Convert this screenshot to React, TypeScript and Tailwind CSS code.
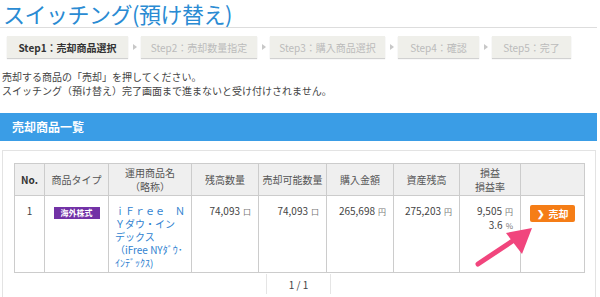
import React from 'react';

const steps = [
  { label: 'Step1：売却商品選択', w: 'w-[121px]', active: true },
  { label: 'Step2：売却数量指定', w: 'w-[116px]', active: false },
  { label: 'Step3：購入商品選択', w: 'w-[115px]', active: false },
  { label: 'Step4：確認', w: 'w-[81px]', active: false },
  { label: 'Step5：完了', w: 'w-[79px]', active: false },
];

function Unit({ children }: { children: React.ReactNode }) {
  return <span className="ml-[3px] text-[8px] text-[#777]">{children}</span>;
}

export default function App() {
  return (
    <div
      className="relative w-[600px] h-[297px] overflow-hidden bg-white text-[#444]"
      style={{ fontFamily: '"Noto Sans CJK JP", "Noto Sans", sans-serif' }}
    >
      {/* title */}
      <div className="mr-[3px] border-b border-[#dddddd] pl-[3px]">
        <h1 className="text-[22px] leading-[27px] text-[#2a8bd3] tracking-[-0.5px]">スイッチング(預け替え)</h1>
      </div>

      {/* steps */}
      <div className="mt-[8px] flex items-center pl-[7px]">
        {steps.map((s, i) => (
          <React.Fragment key={i}>
            {i > 0 && (
              <div className="flex w-[13px] justify-center">
                <span className="h-0 w-0 border-y-[3px] border-l-[4px] border-y-transparent border-l-[#c8c8c8]" />
              </div>
            )}
            <div
              className={`${s.w} flex h-[22px] items-center justify-center bg-[#efefea] text-[10px] shadow-[0_1px_1px_rgba(0,0,0,0.18)] ${
                s.active ? 'font-bold text-[#333]' : 'text-[#bbbbbb]'
              }`}
            >
              {s.label}
            </div>
          </React.Fragment>
        ))}
      </div>

      {/* notes */}
      <div className="mt-[12px] pl-[2px] text-[10px] leading-[14px] text-[#444]">
        <p>売却する商品の「売却」を押してください。</p>
        <p>スイッチング（預け替え）完了画面まで進まないと受け付けされません。</p>
      </div>

      {/* section header */}
      <div className="mr-[3px] mt-[15px] flex h-[28px] items-center bg-[#3a9de6] pl-[12px] text-[12px] font-bold text-white">
        売却商品一覧
      </div>

      {/* panel */}
      <div className="ml-[2px] mr-[4px] mt-[9px] border border-[#e3e3e3] pl-[11px] pr-[12px] pt-[12px] pb-[10px]">
        <table className="w-[570px] table-fixed border-collapse text-[10px]">
          <colgroup>
            <col className="w-[30px]" />
            <col className="w-[64px]" />
            <col className="w-[83px]" />
            <col className="w-[67px]" />
            <col className="w-[68px]" />
            <col className="w-[67px]" />
            <col className="w-[66px]" />
            <col className="w-[61px]" />
            <col className="w-[64px]" />
          </colgroup>
          <thead>
            <tr className="h-[32px] bg-[#efefef] text-center leading-[14px] text-[#555]">
              <th className="border border-[#cccccc] font-bold text-[#333]">No.</th>
              <th className="border border-[#cccccc] font-normal">商品タイプ</th>
              <th className="border border-[#cccccc] font-normal">
                運用商品名
                <br />
                （略称）
              </th>
              <th className="border border-[#cccccc] font-normal">残高数量</th>
              <th className="border border-[#cccccc] font-normal">売却可能数量</th>
              <th className="border border-[#cccccc] font-normal">購入金額</th>
              <th className="border border-[#cccccc] font-normal">資産残高</th>
              <th className="border border-[#cccccc] font-normal">
                損益
                <br />
                損益率
              </th>
              <th className="border border-[#cccccc]" />
            </tr>
          </thead>
          <tbody>
            <tr className="h-[77px] align-top leading-[13px]">
              <td className="border border-[#cccccc] pt-[8px] text-center">1</td>
              <td className="border border-[#cccccc] pt-[9px] text-center">
                <span className="inline-block h-[12px] w-[46px] bg-[#7232a6] text-center text-[8px] font-bold leading-[12px] text-white">
                  海外株式
                </span>
              </td>
              <td className="border border-[#cccccc] px-[6px] pt-[8px] text-[#2f7fd0]">
                <span>
                  ｉＦｒｅｅ　ＮＹダウ・イン
                  <br />
                  デックス
                </span>
                <br />
                <span className="text-[10px]">（iFree NYﾀﾞｳ･ｲﾝﾃﾞｯｸｽ)</span>
              </td>
              <td className="border border-[#cccccc] pr-[7px] pt-[8px] text-right">
                74,093<Unit>口</Unit>
              </td>
              <td className="border border-[#cccccc] pr-[7px] pt-[8px] text-right">
                74,093<Unit>口</Unit>
              </td>
              <td className="border border-[#cccccc] pr-[7px] pt-[8px] text-right">
                265,698<Unit>円</Unit>
              </td>
              <td className="border border-[#cccccc] pr-[7px] pt-[8px] text-right">
                275,203<Unit>円</Unit>
              </td>
              <td className="border border-[#cccccc] pr-[7px] pt-[8px] text-right">
                9,505<Unit>円</Unit>
                <br />
                3.6<Unit>%</Unit>
              </td>
              <td className="border border-[#cccccc] pt-[9px] text-center">
                <button className="inline-flex h-[17px] w-[45px] items-center justify-center gap-[4px] rounded-[2px] bg-[#f57d16] text-[10px] font-bold text-white">
                  <span className="text-[9px]">❯</span>売却
                </button>
              </td>
            </tr>
          </tbody>
        </table>

        {/* pagination */}
        <div className="mt-[1px] flex justify-center">
          <div className="flex h-[20px] w-[65px] items-center justify-center border-x border-[#e5e5e5] text-[10px] text-[#444]">
            1 / 1
          </div>
        </div>
      </div>

      {/* pointer arrow */}
      <svg className="absolute left-[470px] top-[220px]" width="70" height="52" viewBox="0 0 70 52">
        <line x1="8" y1="44" x2="50" y2="16" stroke="#f1457d" strokeWidth="5" strokeLinecap="round" />
        <polygon points="62,8 36,13 52,34" fill="#f1457d" />
      </svg>
    </div>
  );
}
